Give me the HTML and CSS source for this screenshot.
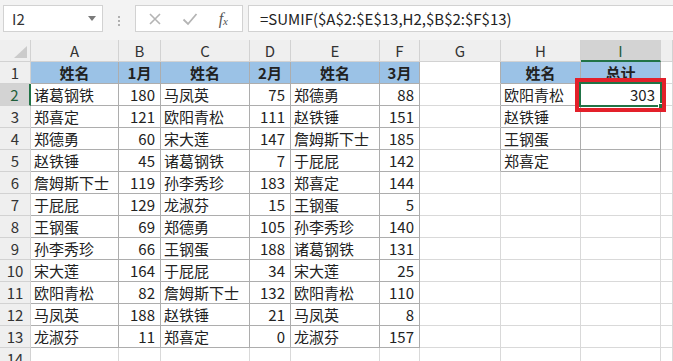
FILE: index.html
```html
<!DOCTYPE html>
<html lang="zh-CN">
<head>
    <meta charset="UTF-8">
    <meta name="viewport" content="width=device-width, initial-scale=1.0">
    <title>SUMIF</title>
    <link rel="stylesheet" href="styles.css">
</head>
<body>
    <div class="toolbar">
        <div class="namebox">
            <span>I2</span>
            <svg class="arrow" width="8" height="5" viewBox="0 0 8 5"><path d="M0 0h8L4 5z" fill="#7a7a7a"/></svg>
        </div>
        <div class="dots"><i></i><i></i><i></i></div>
        <div class="buttons">
            <svg width="14" height="14" viewBox="0 0 14 14"><path d="M2 2l10 10M12 2L2 12" stroke="#b4b4b4" stroke-width="1.6" fill="none"/></svg>
            <svg width="16" height="14" viewBox="0 0 16 14"><path d="M1.5 7.5l4.5 4.5L14.5 2" stroke="#b4b4b4" stroke-width="1.8" fill="none"/></svg>
            <span class="fx">f<sub>x</sub></span>
        </div>
        <div class="formula">=SUMIF($A$2:$E$13,H2,$B$2:$F$13)</div>
    </div>

    <div class="sheet">
        <!-- 列标 -->
        <div class="c ch corner"><svg width="13" height="12" viewBox="0 0 13 12"><path d="M13 0V12H0z" fill="#cbcbcb"/></svg></div>
        <div class="c ch">A</div>
        <div class="c ch">B</div>
        <div class="c ch">C</div>
        <div class="c ch">D</div>
        <div class="c ch">E</div>
        <div class="c ch">F</div>
        <div class="c ch">G</div>
        <div class="c ch">H</div>
        <div class="c ch on">I</div>
        <div class="c ch"></div>

        <!-- 1 -->
        <div class="c rh">1</div>
        <div class="c t hd">姓名</div>
        <div class="c t hd">1月</div>
        <div class="c t hd">姓名</div>
        <div class="c t hd">2月</div>
        <div class="c t hd">姓名</div>
        <div class="c t hd">3月</div>
        <div class="c gl"></div>
        <div class="c t hd">姓名</div>
        <div class="c t hd">总计</div>
        <div class="c"></div>

        <!-- 2 -->
        <div class="c rh on">2</div>
        <div class="c t">诸葛钢铁</div>
        <div class="c t n">180</div>
        <div class="c t">马凤英</div>
        <div class="c t n">75</div>
        <div class="c t">郑德勇</div>
        <div class="c t n">88</div>
        <div class="c gl"></div>
        <div class="c t">欧阳青松</div>
        <div class="c t n sel">303<span class="frame"></span><span class="handle"></span><span class="mark"></span></div>
        <div class="c"></div>

        <!-- 3 -->
        <div class="c rh">3</div>
        <div class="c t">郑喜定</div>
        <div class="c t n">121</div>
        <div class="c t">欧阳青松</div>
        <div class="c t n">111</div>
        <div class="c t">赵铁锤</div>
        <div class="c t n">151</div>
        <div class="c gl"></div>
        <div class="c t">赵铁锤</div>
        <div class="c t"></div>
        <div class="c"></div>

        <!-- 4 -->
        <div class="c rh">4</div>
        <div class="c t">郑德勇</div>
        <div class="c t n">60</div>
        <div class="c t">宋大莲</div>
        <div class="c t n">147</div>
        <div class="c t">詹姆斯下士</div>
        <div class="c t n">185</div>
        <div class="c gl"></div>
        <div class="c t">王钢蛋</div>
        <div class="c t"></div>
        <div class="c"></div>

        <!-- 5 -->
        <div class="c rh">5</div>
        <div class="c t">赵铁锤</div>
        <div class="c t n">45</div>
        <div class="c t">诸葛钢铁</div>
        <div class="c t n">7</div>
        <div class="c t">于屁屁</div>
        <div class="c t n">142</div>
        <div class="c gl"></div>
        <div class="c t">郑喜定</div>
        <div class="c t"></div>
        <div class="c"></div>

        <!-- 6 -->
        <div class="c rh">6</div>
        <div class="c t">詹姆斯下士</div>
        <div class="c t n">119</div>
        <div class="c t">孙李秀珍</div>
        <div class="c t n">183</div>
        <div class="c t">郑喜定</div>
        <div class="c t n">144</div>
        <div class="c"></div>
        <div class="c"></div>
        <div class="c"></div>
        <div class="c"></div>

        <!-- 7 -->
        <div class="c rh">7</div>
        <div class="c t">于屁屁</div>
        <div class="c t n">129</div>
        <div class="c t">龙淑芬</div>
        <div class="c t n">15</div>
        <div class="c t">王钢蛋</div>
        <div class="c t n">5</div>
        <div class="c"></div>
        <div class="c"></div>
        <div class="c"></div>
        <div class="c"></div>

        <!-- 8 -->
        <div class="c rh">8</div>
        <div class="c t">王钢蛋</div>
        <div class="c t n">69</div>
        <div class="c t">郑德勇</div>
        <div class="c t n">105</div>
        <div class="c t">孙李秀珍</div>
        <div class="c t n">140</div>
        <div class="c"></div>
        <div class="c"></div>
        <div class="c"></div>
        <div class="c"></div>

        <!-- 9 -->
        <div class="c rh">9</div>
        <div class="c t">孙李秀珍</div>
        <div class="c t n">66</div>
        <div class="c t">王钢蛋</div>
        <div class="c t n">188</div>
        <div class="c t">诸葛钢铁</div>
        <div class="c t n">131</div>
        <div class="c"></div>
        <div class="c"></div>
        <div class="c"></div>
        <div class="c"></div>

        <!-- 10 -->
        <div class="c rh">10</div>
        <div class="c t">宋大莲</div>
        <div class="c t n">164</div>
        <div class="c t">于屁屁</div>
        <div class="c t n">34</div>
        <div class="c t">宋大莲</div>
        <div class="c t n">25</div>
        <div class="c"></div>
        <div class="c"></div>
        <div class="c"></div>
        <div class="c"></div>

        <!-- 11 -->
        <div class="c rh">11</div>
        <div class="c t">欧阳青松</div>
        <div class="c t n">82</div>
        <div class="c t">詹姆斯下士</div>
        <div class="c t n">132</div>
        <div class="c t">欧阳青松</div>
        <div class="c t n">110</div>
        <div class="c"></div>
        <div class="c"></div>
        <div class="c"></div>
        <div class="c"></div>

        <!-- 12 -->
        <div class="c rh">12</div>
        <div class="c t">马凤英</div>
        <div class="c t n">188</div>
        <div class="c t">赵铁锤</div>
        <div class="c t n">21</div>
        <div class="c t">马凤英</div>
        <div class="c t n">8</div>
        <div class="c"></div>
        <div class="c"></div>
        <div class="c"></div>
        <div class="c"></div>

        <!-- 13 -->
        <div class="c rh">13</div>
        <div class="c t">龙淑芬</div>
        <div class="c t n">11</div>
        <div class="c t">郑喜定</div>
        <div class="c t n">0</div>
        <div class="c t">龙淑芬</div>
        <div class="c t n">157</div>
        <div class="c"></div>
        <div class="c"></div>
        <div class="c"></div>
        <div class="c"></div>

        <!-- 14 -->
        <div class="c rh">14</div>
        <div class="c"></div>
        <div class="c"></div>
        <div class="c"></div>
        <div class="c"></div>
        <div class="c"></div>
        <div class="c"></div>
        <div class="c"></div>
        <div class="c"></div>
        <div class="c"></div>
        <div class="c"></div>
    </div>
</body>
</html>
```

FILE: styles.css
```css
body {
    margin: 0;
    width: 673px;
    height: 361px;
    overflow: hidden;
    background-color: #f3f3f3;
    font-family: "Noto Sans CJK SC", "Liberation Sans", sans-serif;
    color: #222;
}
.toolbar {
    height: 40px;
    box-sizing: border-box;
    padding: 5px 0 0 3px;
    display: flex;
}
.namebox, .buttons, .formula {
    height: 27px;
    box-sizing: border-box;
    background-color: white;
    border: 1px solid #d2d2d2;
    display: flex;
    align-items: center;
}
.namebox {
    width: 100px;
    padding: 0 6px 0 8px;
    justify-content: space-between;
    font-size: 15px;
    color: #333;
}
.dots {
    width: 32px;
    display: flex;
    flex-direction: column;
    align-items: center;
    justify-content: center;
    gap: 2px;
    padding-bottom: 3px;
}
.dots i {
    width: 2px;
    height: 2px;
    background-color: #b0b0b0;
}
.buttons {
    width: 108px;
    padding: 0 12px 0 12px;
    justify-content: space-between;
}
.fx {
    font-family: "Liberation Serif", serif;
    font-style: italic;
    font-size: 16px;
    color: #555;
    padding-right: 2px;
}
.fx sub {
    font-size: 11px;
    vertical-align: -1px;
}
.formula {
    flex: 1;
    margin-left: 5px;
    padding-left: 11px;
    border-right: none;
    font-size: 15px;
    color: #222;
}
.sheet {
    display: grid;
    grid-template-columns: 31px 88px 42px 89px 41px 89px 40px 81px 80px 80px 1fr;
    grid-auto-rows: 22px;
    background-color: white;
}
.c {
    box-sizing: border-box;
    border-right: 1px solid #d9d9d9;
    border-bottom: 1px solid #d9d9d9;
    display: flex;
    align-items: center;
    padding: 0 3px;
    font-size: 15px;
    white-space: nowrap;
    overflow: hidden;
}
.ch, .rh {
    background-color: #efefef;
    border-color: #d2d2d2;
    justify-content: center;
    color: #333;
}
.corner {
    justify-content: flex-end;
    align-items: flex-end;
    padding: 0 3px 3px 0;
}
.ch.on {
    background-color: #d3d3d3;
    border-bottom: 2px solid #217346;
    color: #1e5e3a;
}
.rh.on {
    background-color: #d3d3d3;
    border-right: 2px solid #217346;
    color: #1e5e3a;
}
.t {
    border-color: #adadad;
}
.gl {
    border-right-color: #adadad;
}
.hd {
    background-color: #9bc2e6;
    font-weight: bold;
    justify-content: center;
}
.n {
    justify-content: flex-end;
    padding-right: 5px;
}
.sel {
    position: relative;
    overflow: visible;
}
.frame {
    position: absolute;
    left: -2px;
    top: -2px;
    right: -2px;
    bottom: -2px;
    border: 2px solid #217346;
}
.handle {
    position: absolute;
    right: -5px;
    bottom: -5px;
    width: 5px;
    height: 5px;
    background-color: #217346;
    border: 1px solid white;
}
.mark {
    position: absolute;
    left: -6px;
    top: -6px;
    right: -6px;
    bottom: -7px;
    border: 4px solid #e3202a;
}
```
